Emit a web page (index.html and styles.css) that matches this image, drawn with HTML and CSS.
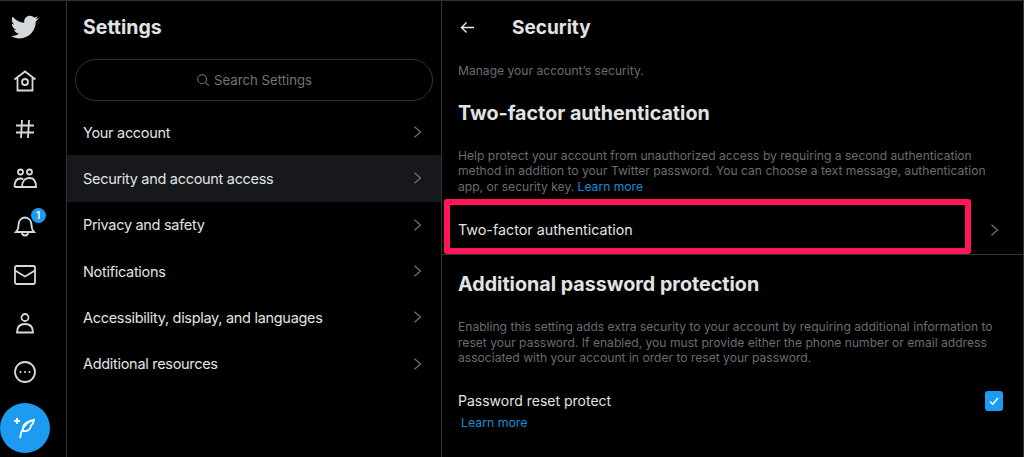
FILE: index.html
```html
<!DOCTYPE html>
<html lang="en">
<head>
    <meta charset="UTF-8">
    <meta name="viewport" content="width=device-width, initial-scale=1.0">
    <title>Security</title>
    <link rel="stylesheet" href="styles.css">
</head>
<body>
    <div class="app">
        <!-- left icon rail -->
        <nav class="rail">
            <svg class="logo" viewBox="0 0 24 24"><path d="M23.6 4.6c-.9.4-1.8.6-2.8.8 1-.6 1.8-1.5 2.1-2.7-.9.6-2 1-3.1 1.2C18.9 2.9 17.6 2.3 16.2 2.3c-2.7 0-4.9 2.2-4.9 4.9 0 .4 0 .8.1 1.1C7.4 8.1 3.800 6.100 1.400 3.200 1 3.900.7 4.800.7 5.700c0 1.700.9 3.200 2.200 4.100-.8 0-1.600-.2-2.200-.6v.1c0 2.400 1.700 4.400 3.900 4.800-.4.1-.8.2-1.300.2-.3 0-.6 0-.9-.1.6 2 2.400 3.400 4.600 3.400-1.700 1.300-3.800 2.100-6.100 2.100-.4 0-.8 0-1.200-.1 2.200 1.400 4.800 2.200 7.500 2.200 9.100 0 14-7.500 14-14v-.6c1-.7 1.800-1.600 2.500-2.500z"/></svg>
            <svg class="icon" viewBox="0 0 24 24"><path d="M1.500 10.500L12 2.500l10.500 8M4.500 8.500V21.500h15V8.500"/><circle cx="12" cy="13" r="3"/></svg>
            <svg class="icon" viewBox="0 0 24 24"><path d="M3 8.500h18M3 15.500h18M9 3l-1 18M16 3l-1 18"/></svg>
            <svg class="icon" viewBox="0 0 24 24"><circle cx="7.500" cy="6" r="2.500"/><circle cx="16.500" cy="6" r="2.500"/><path d="M1.500 21c0-5 2-8.500 6-8.500 1 0 2 .2 2.700.7M9 21c0-5 2.500-9 7.500-9s6.500 4 6.500 9zM1.500 21H9"/></svg>
            <div class="bell">
                <svg class="icon" viewBox="0 0 24 24"><path d="M3 18c2-2 2.500-3.500 2.500-7 0-4 2.500-7.500 6.500-7.500s6.500 3.500 6.500 7.500c0 3.500.5 5 2.500 7zM9 18.500c0 2 1.300 3 3 3s3-1 3-3"/></svg>
                <span class="badge">1</span>
            </div>
            <svg class="icon" viewBox="0 0 24 24"><rect x="2" y="3" width="20" height="18" rx="1.500"/><path d="M2 7.500L12 13.500l10-6"/></svg>
            <svg class="icon" viewBox="0 0 24 24"><circle cx="12" cy="6.500" r="3.500"/><path d="M4 21.500c0-5.500 3-8.500 8-8.500s8 3 8 8.500z"/></svg>
            <svg class="icon" viewBox="0 0 24 24"><circle cx="12" cy="12" r="10"/><circle class="dot" cx="7.500" cy="12" r="1"/><circle class="dot" cx="12" cy="12" r="1"/><circle class="dot" cx="16.500" cy="12" r="1"/></svg>
            <div class="compose">
                <svg viewBox="0 0 24 24"><path d="M1 5h6M4 2v6M7 22c1-7 4-13 9-16M10 15c-1-5 2-9 11-11-.5 3-1.500 4.500-3 5.500 0 3-3 6.500-8 5.500z"/></svg>
            </div>
        </nav>

        <!-- settings menu -->
        <section class="menu">
            <h2 class="menu-title">Settings</h2>
            <div class="search">
                <svg viewBox="0 0 24 24"><circle cx="10.500" cy="10.500" r="7.500"/><path d="M16 16l6 6"/></svg>
                <span>Search Settings</span>
            </div>
            <div class="menu-list">
                <div class="menu-item"><span>Your account</span><svg class="chevron" viewBox="0 0 12 16"><path d="M2 1l8 7-8 7"/></svg></div>
                <div class="menu-item active"><span>Security and account access</span><svg class="chevron" viewBox="0 0 12 16"><path d="M2 1l8 7-8 7"/></svg></div>
                <div class="menu-item"><span>Privacy and safety</span><svg class="chevron" viewBox="0 0 12 16"><path d="M2 1l8 7-8 7"/></svg></div>
                <div class="menu-item"><span>Notifications</span><svg class="chevron" viewBox="0 0 12 16"><path d="M2 1l8 7-8 7"/></svg></div>
                <div class="menu-item"><span>Accessibility, display, and languages</span><svg class="chevron" viewBox="0 0 12 16"><path d="M2 1l8 7-8 7"/></svg></div>
                <div class="menu-item"><span>Additional resources</span><svg class="chevron" viewBox="0 0 12 16"><path d="M2 1l8 7-8 7"/></svg></div>
            </div>
        </section>

        <!-- security detail -->
        <main class="detail">
            <header class="detail-head">
                <svg class="back" viewBox="0 0 16 14"><path d="M15 7H2M7 1.500L1.500 7 7 12.500"/></svg>
                <h2>Security</h2>
            </header>
            <p class="note manage">Manage your account’s security.</p>
            <h3>Two-factor authentication</h3>
            <p class="note">Help protect your account from unauthorized access by requiring a second authentication method in addition to your Twitter password. You can choose a text message, authentication app, or security key. <a class="link" href="#">Learn more</a></p>
            <div class="row">
                <span>Two-factor authentication</span>
                <svg class="chevron" viewBox="0 0 12 16"><path d="M2 1l8 7-8 7"/></svg>
                <div class="highlight"></div>
            </div>
            <h3 class="second">Additional password protection</h3>
            <p class="note">Enabling this setting adds extra security to your account by requiring additional information to reset your password. If enabled, you must provide either the phone number or email address associated with your account in order to reset your password.</p>
            <div class="protect">
                <span>Password reset protect</span>
                <div class="checkbox"><svg viewBox="0 0 14 14"><path d="M3 7.500l2.700 2.700L11 4"/></svg></div>
            </div>
            <a class="link protect-link" href="#">Learn more</a>
        </main>
    </div>
</body>
</html>
```

FILE: styles.css
```css
* {
    box-sizing: border-box;
}

html, body {
    margin: 0;
    height: 100%;
    background: #000;
    overflow: hidden;
}

body {
    font-family: Inter, "Liberation Sans", sans-serif;
    color: #e1e3e4;
}

.app {
    display: flex;
    height: 457px;
    border-top: 1px solid #2f3336;
}

/* icon rail */
.rail {
    width: 67px;
    flex-shrink: 0;
    border-right: 1px solid #2f3336;
    display: flex;
    flex-direction: column;
    align-items: center;
    padding-top: 12px;
    padding-right: 17px;
}

.logo {
    width: 28px;
    height: 28px;
    fill: #d6d9db;
    margin-bottom: 27.500px;
    flex-shrink: 0;
}

.icon {
    display: block;
    width: 24px;
    height: 24px;
    fill: none;
    stroke: #d6d9db;
    stroke-width: 1.800;
    margin-bottom: 24.600px;
    flex-shrink: 0;
}

.icon .dot {
    fill: #d6d9db;
    stroke: none;
}

.bell {
    position: relative;
    height: 24px;
    margin-bottom: 24.600px;
    flex-shrink: 0;
}

.badge {
    position: absolute;
    top: -6px;
    right: -9px;
    width: 15px;
    height: 15px;
    border-radius: 50%;
    background: #1d9bf0;
    color: #fff;
    font-size: 10px;
    font-weight: 600;
    line-height: 15px;
    text-align: center;
}

.compose {
    width: 50px;
    height: 50px;
    border-radius: 50%;
    background: #1d9bf0;
    display: flex;
    align-items: center;
    justify-content: center;
    margin-top: -6px;
    flex-shrink: 0;
}

.compose svg {
    width: 24px;
    height: 24px;
    fill: none;
    stroke: #fff;
    stroke-width: 1.800;
}

/* settings menu */
.menu {
    width: 375px;
    flex-shrink: 0;
    border-right: 1px solid #2f3336;
}

.menu-title {
    margin: 0;
    padding: 15px 16px 0;
    font-size: 19.500px;
    font-weight: 700;
    line-height: 23px;
}

.search {
    margin: 20px 8px 0;
    height: 42px;
    border: 1px solid #2f3336;
    border-radius: 22px;
    display: flex;
    align-items: center;
    justify-content: center;
    gap: 4px;
    color: #71767b;
    font-size: 13.200px;
}

.search svg {
    width: 14px;
    height: 14px;
    fill: none;
    stroke: #71767b;
    stroke-width: 1.800;
}

.menu-list {
    margin-top: 8px;
}

.menu-item {
    height: 46.300px;
    display: flex;
    align-items: center;
    justify-content: space-between;
    padding: 0 19px 0 16px;
    font-size: 14.500px;
    letter-spacing: -0.3px;
}

.menu-item.active {
    background: #16181c;
}

.chevron {
    width: 9px;
    height: 12px;
    fill: none;
    stroke: #71767b;
    stroke-width: 1.500;
    flex-shrink: 0;
}

/* detail */
.detail {
    flex: 1;
    min-width: 0;
    border-right: 1px solid #2f3336;
}

.detail-head {
    display: flex;
    align-items: center;
    height: 52px;
    padding-left: 18px;
}

.back {
    width: 15px;
    height: 13px;
    fill: none;
    stroke: #e7e9ea;
    stroke-width: 1.500;
    margin-right: 37px;
}

.detail-head h2 {
    margin: 0;
    font-size: 19px;
    font-weight: 700;
}

.note {
    margin: 0;
    padding: 0 16px;
    color: #686d72;
    font-size: 12.100px;
    line-height: 15.500px;
}

.manage {
    margin-top: 10px;
}

h3 {
    margin: 0;
    padding: 0 16px;
    font-size: 19.700px;
    font-weight: 700;
    line-height: 24px;
}

.detail h3 {
    margin-top: 22px;
    margin-bottom: 23px;
}

.detail h3.second {
    margin-top: 17px;
    margin-bottom: 23px;
}

.link {
    color: #1a8cd8;
    text-decoration: none;
}

.row {
    position: relative;
    height: 56px;
    margin-top: 5px;
    border-bottom: 1px solid #2f3336;
    display: flex;
    align-items: center;
    justify-content: space-between;
    padding: 6px 24px 0 16px;
    font-size: 14.300px;
}

.highlight {
    position: absolute;
    left: 2px;
    top: 0;
    width: 527px;
    height: 55px;
    border: 6px solid #ff1558;
    border-radius: 3px;
}

.protect {
    display: flex;
    align-items: center;
    justify-content: space-between;
    padding: 0 20px 0 16px;
    margin-top: 25px;
    font-size: 14px;
}

.checkbox {
    width: 18px;
    height: 20px;
    border-radius: 3px;
    background: #1d9bf0;
    display: flex;
    align-items: center;
    justify-content: center;
}

.checkbox svg {
    width: 14px;
    height: 14px;
    fill: none;
    stroke: #fff;
    stroke-width: 1.500;
}

.protect-link {
    display: block;
    margin: 4px 0 0 19px;
    font-size: 12.300px;
}
```
